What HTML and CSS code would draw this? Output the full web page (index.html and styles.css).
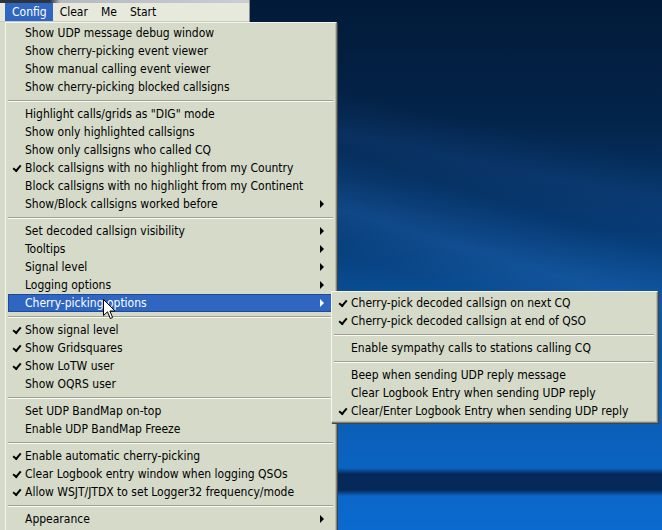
FILE: index.html
```html
<!DOCTYPE html>
<html>
<head>
<meta charset="utf-8">
<link rel="stylesheet" href="styles.css">
</head>
<body>
<div class="desktop">
  <div class="window">
    <div class="titleedge"></div>
    <div class="menubar">
      <span class="mb-item active">Config</span>
      <span class="mb-item">Clear</span>
      <span class="mb-item">Me</span>
      <span class="mb-item">Start</span>
    </div>
  </div>

  <div class="menu main">
    <div class="item">Show UDP message debug window</div>
    <div class="item">Show cherry-picking event viewer</div>
    <div class="item">Show manual calling event viewer</div>
    <div class="item">Show cherry-picking blocked callsigns</div>
    <div class="sep"></div>
    <div class="item">Highlight calls/grids as "DIG" mode</div>
    <div class="item">Show only highlighted callsigns</div>
    <div class="item">Show only callsigns who called CQ</div>
    <div class="item checked">Block callsigns with no highlight from my Country</div>
    <div class="item">Block callsigns with no highlight from my Continent</div>
    <div class="item sub">Show/Block callsigns worked before</div>
    <div class="sep"></div>
    <div class="item sub">Set decoded callsign visibility</div>
    <div class="item sub">Tooltips</div>
    <div class="item sub">Signal level</div>
    <div class="item sub">Logging options</div>
    <div class="item sub hl">Cherry-picking options</div>
    <div class="sep"></div>
    <div class="item checked">Show signal level</div>
    <div class="item checked">Show Gridsquares</div>
    <div class="item checked">Show LoTW user</div>
    <div class="item">Show OQRS user</div>
    <div class="sep"></div>
    <div class="item">Set UDP BandMap on-top</div>
    <div class="item">Enable UDP BandMap Freeze</div>
    <div class="sep"></div>
    <div class="item checked">Enable automatic cherry-picking</div>
    <div class="item checked">Clear Logbook entry window when logging QSOs</div>
    <div class="item checked">Allow WSJT/JTDX to set Logger32 frequency/mode</div>
    <div class="sep"></div>
    <div class="item sub">Appearance</div>
  </div>

  <div class="menu submenu">
    <div class="item checked">Cherry-pick decoded callsign on next CQ</div>
    <div class="item checked">Cherry-pick decoded callsign at end of QSO</div>
    <div class="sep"></div>
    <div class="item">Enable sympathy calls to stations calling CQ</div>
    <div class="sep"></div>
    <div class="item">Beep when sending UDP reply message</div>
    <div class="item">Clear Logbook Entry when sending UDP reply</div>
    <div class="item checked">Clear/Enter Logbook Entry when sending UDP reply</div>
  </div>

  <svg class="cursor" width="13" height="21" viewBox="0 0 13 21">
    <path d="M0.5 0.5 L0.5 16.5 L4.5 12.8 L7.3 19.5 L9.6 18.5 L6.9 12 L12 12 Z" fill="#fff" stroke="#000" stroke-width="1" stroke-linejoin="miter"/>
  </svg>
</div>
</body>
</html>
```

FILE: styles.css
```css
html, body {
  margin: 0;
  padding: 0;
}
body {
  width: 662px;
  height: 530px;
  overflow: hidden;
  font-family: "DejaVu Sans Condensed", "DejaVu Sans", Verdana, sans-serif;
  font-size: 12px;
}
.desktop {
  position: relative;
  width: 662px;
  height: 530px;
  overflow: hidden;
  background:
    linear-gradient(180deg, rgba(0,0,0,0) 0, rgba(0,0,0,0) 468px, rgba(4,30,70,0.85) 474px, rgba(4,30,70,0.85) 490px, rgba(0,0,0,0) 496px),
    linear-gradient(17deg, rgba(0,0,0,0) 0, rgba(0,0,0,0) 52%, rgba(40,110,190,0.3) 58%, rgba(0,0,0,0) 66%),
    linear-gradient(12deg, rgba(0,0,0,0) 0, rgba(0,0,0,0) 64%, rgba(30,80,150,0.22) 70%, rgba(0,0,0,0) 76%),
    linear-gradient(180deg, #021a38 0, #03244a 120px, #063a74 230px, #0a4f96 300px, #0b5eb6 420px, #0b6ad0 530px);
}
.window {
  position: absolute;
  left: 0;
  top: 0;
  width: 249px;
  height: 530px;
  background: #d5dac9;
  border-right: 1px solid #8b8f88;
}
.titleedge {
  height: 3px;
  background: linear-gradient(90deg, #2c3440 0, #2c3440 50px, #b5b9c0 60px, #c9ccd2 240px);
}
.menubar {
  display: flex;
  height: 18px;
  align-items: stretch;
  padding-left: 5px;
  background: #e7e9dd;
  border-bottom: 1px solid #c8cbc0;
}
.mb-item {
  display: flex;
  align-items: center;
  padding: 0 6px 0 7px;
  color: #000;
}
.mb-item.active {
  background: #2f66c2;
  color: #fff;
}
.menu {
  position: absolute;
  background: #d5dac9;
  box-sizing: border-box;
  border-top: 1px solid #f4f6ee;
  border-left: 1px solid #f4f6ee;
  border-right: 1px solid #808378;
  border-bottom: 1px solid #808378;
  box-shadow: inset -1px -1px 0 #b8bcad, 1px 1px 0 #40444a;
  padding: 1px 3px 2px 2px;
  color: #000;
}
.main {
  left: 5px;
  top: 22px;
  width: 332px;
  height: 520px;
}
.submenu {
  left: 331px;
  top: 291px;
  width: 327px;
  padding-top: 2px;
}
.item {
  position: relative;
  height: 18px;
  line-height: 18px;
  padding-left: 17px;
  white-space: nowrap;
}
.item.checked::before {
  content: "";
  position: absolute;
  left: 5px;
  top: 6px;
  width: 6px;
  height: 3px;
  border-left: 2px solid #000;
  border-bottom: 2px solid #000;
  transform: rotate(-50deg);
}
.item.sub::after {
  content: "";
  position: absolute;
  right: 9px;
  top: 5px;
  border-left: 4px solid #000;
  border-top: 4px solid transparent;
  border-bottom: 4px solid transparent;
}
.item.hl {
  background: #2f66c2;
  color: #fff;
  box-shadow: inset 0 0 0 1px #1d4a99;
}
.item.hl::after {
  border-left-color: #fff;
}
.sep {
  height: 1px;
  margin: 4px 0 3px 0;
  border-top: 1px solid #9ea192;
  background: #fafbf6;
}
.cursor {
  position: absolute;
  left: 103px;
  top: 299px;
}
```
